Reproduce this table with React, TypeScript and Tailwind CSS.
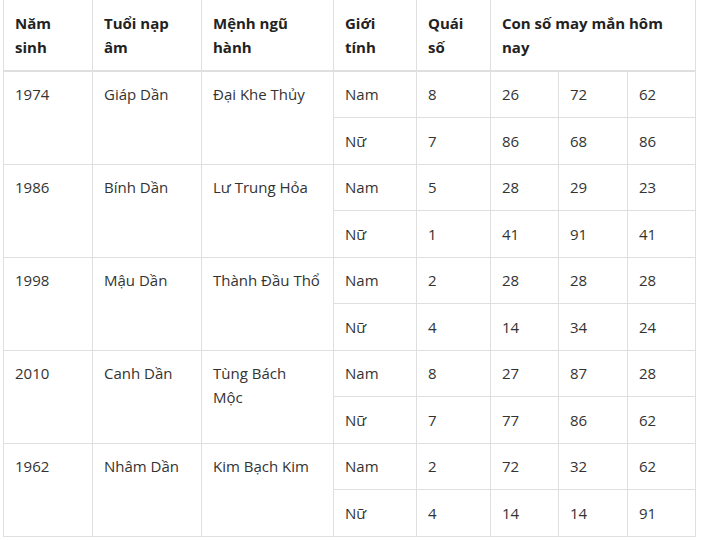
import React from "react";

interface YearRow {
  year: string;
  napAm: string;
  menh: React.ReactNode;
  nam: { quai: string; nums: string[] };
  nu: { quai: string; nums: string[] };
}

const rows: YearRow[] = [
  {
    year: "1974",
    napAm: "Giáp Dần",
    menh: "Đại Khe Thủy",
    nam: { quai: "8", nums: ["26", "72", "62"] },
    nu: { quai: "7", nums: ["86", "68", "86"] },
  },
  {
    year: "1986",
    napAm: "Bính Dần",
    menh: "Lư Trung Hỏa",
    nam: { quai: "5", nums: ["28", "29", "23"] },
    nu: { quai: "1", nums: ["41", "91", "41"] },
  },
  {
    year: "1998",
    napAm: "Mậu Dần",
    menh: "Thành Đầu Thổ",
    nam: { quai: "2", nums: ["28", "28", "28"] },
    nu: { quai: "4", nums: ["14", "34", "24"] },
  },
  {
    year: "2010",
    napAm: "Canh Dần",
    menh: (
      <>
        Tùng Bách
        <br />
        Mộc
      </>
    ),
    nam: { quai: "8", nums: ["27", "87", "28"] },
    nu: { quai: "7", nums: ["77", "86", "62"] },
  },
  {
    year: "1962",
    napAm: "Nhâm Dần",
    menh: "Kim Bạch Kim",
    nam: { quai: "2", nums: ["72", "32", "62"] },
    nu: { quai: "4", nums: ["14", "14", "91"] },
  },
];

const cell = "border border-[#dfdfdf] px-[11px] py-[10.75px] align-top";
const th = "border border-t-0 border-b-2 border-[#dfdfdf] px-[11px] py-[10.75px] text-left align-top font-bold text-[#222]";

const App: React.FC = () => {
  return (
    <div
      className="min-h-[541px] bg-white pl-[3px] text-[15px] leading-6 text-[#333]"
      style={{ fontFamily: '"Open Sans", "Liberation Sans", sans-serif' }}
    >
      <table className="w-[693px] table-fixed border-collapse">
        <colgroup>
          <col className="w-[89px]" />
          <col className="w-[109px]" />
          <col className="w-[132px]" />
          <col className="w-[83px]" />
          <col className="w-[74px]" />
          <col className="w-[68px]" />
          <col className="w-[69px]" />
          <col className="w-[68px]" />
        </colgroup>
        <thead>
          <tr>
            <th className={th}>Năm sinh</th>
            <th className={th}>Tuổi nạp âm</th>
            <th className={th}>Mệnh ngũ hành</th>
            <th className={th}>Giới tính</th>
            <th className={th}>Quái số</th>
            <th className={th} colSpan={3}>
              Con số may mắn hôm nay
            </th>
          </tr>
        </thead>
        <tbody>
          {rows.map((r) => (
            <React.Fragment key={r.year}>
              <tr>
                <td className={cell} rowSpan={2}>
                  {r.year}
                </td>
                <td className={cell} rowSpan={2}>
                  {r.napAm}
                </td>
                <td className={cell} rowSpan={2}>
                  {r.menh}
                </td>
                <td className={cell}>Nam</td>
                <td className={cell}>{r.nam.quai}</td>
                {r.nam.nums.map((n, i) => (
                  <td key={i} className={cell}>
                    {n}
                  </td>
                ))}
              </tr>
              <tr>
                <td className={cell}>Nữ</td>
                <td className={cell}>{r.nu.quai}</td>
                {r.nu.nums.map((n, i) => (
                  <td key={i} className={cell}>
                    {n}
                  </td>
                ))}
              </tr>
            </React.Fragment>
          ))}
        </tbody>
      </table>
    </div>
  );
};

export default App;
